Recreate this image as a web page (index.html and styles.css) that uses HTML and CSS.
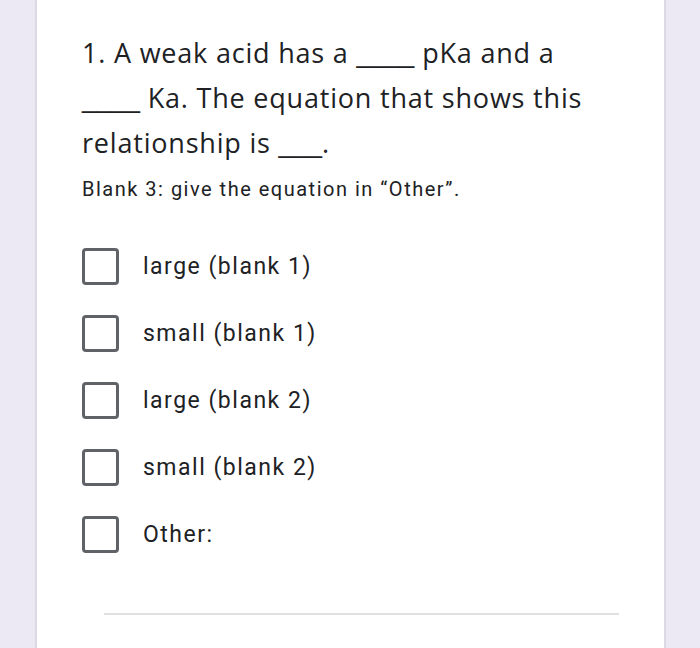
FILE: index.html
```html
<!DOCTYPE html>
<html>
<head>
<meta charset="utf-8">
<link rel="stylesheet" href="styles.css">
</head>
<body>
<div class="card">
  <div class="title">1. A weak acid has a <span class="blank">____</span> pKa and a <span class="blank">____</span> Ka. The equation that shows this relationship is <span class="blank">___</span>.</div>
  <div class="desc">Blank 3: give the equation in “Other”.</div>
  <div class="options">
    <div class="option"><span class="box"></span><span class="label">large (blank 1)</span></div>
    <div class="option"><span class="box"></span><span class="label">small (blank 1)</span></div>
    <div class="option"><span class="box"></span><span class="label">large (blank 2)</span></div>
    <div class="option"><span class="box"></span><span class="label">small (blank 2)</span></div>
    <div class="option"><span class="box"></span><span class="label">Other:</span></div>
  </div>
  <div class="rule"></div>
</div>
</body>
</html>
```
FILE: styles.css
```css
html, body {
  margin: 0;
  padding: 0;
  background: #ece9f5;
  height: 648px;
  overflow: hidden;
}
.card {
  margin: 0 34px 0 35px;
  height: 648px;
  background: #fff;
  border-left: 2px solid #dcd9e4;
  border-right: 2px solid #dcd9e4;
  padding: 30px 40px 0 45px;
  box-sizing: border-box;
}
.title {
  font-family: "Open Sans", sans-serif;
  font-size: 27px;
  line-height: 45px;
  letter-spacing: 0.8px;
  color: #202124;
  width: 510px;
}
.blank {
  font-family: "Liberation Sans", sans-serif;
  font-size: 26px;
  line-height: 0;
  letter-spacing: 0;
}
.desc {
  margin-top: 10px;
  font-family: Roboto, sans-serif;
  font-size: 20px;
  line-height: 28px;
  letter-spacing: 1.5px;
  color: #202124;
}
.options {
  margin-top: 30px;
  display: flex;
  flex-direction: column;
}
.option {
  height: 67px;
  display: flex;
  align-items: center;
}
.box {
  width: 31px;
  height: 31px;
  border: 3px solid #5f6368;
  border-radius: 4px;
  flex: none;
}
.label {
  margin-left: 24px;
  font-family: Roboto, sans-serif;
  font-size: 23px;
  letter-spacing: 1.5px;
  color: #202124;
}
.rule {
  margin: 45px 0 0 22px;
  width: 515px;
  height: 2px;
  background: #e0e0e3;
}
```
